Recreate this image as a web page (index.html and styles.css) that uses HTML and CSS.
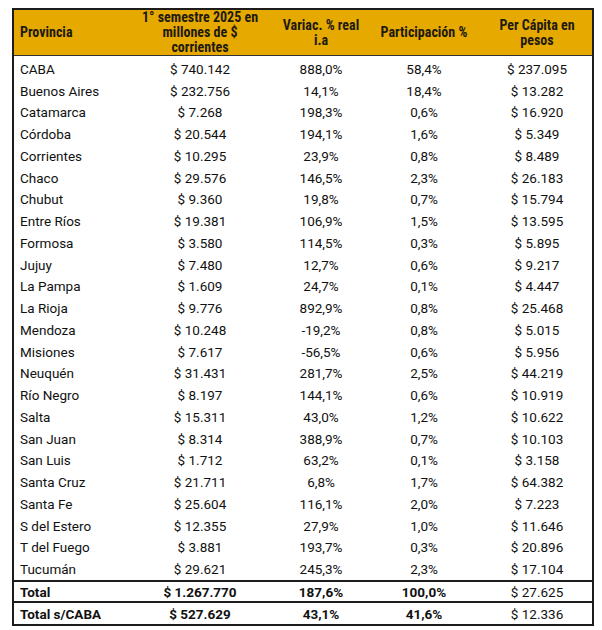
FILE: index.html
```html
<!DOCTYPE html>
<html lang="es">
<head>
    <meta charset="UTF-8">
    <title>Transferencias por provincia</title>
    <link rel="stylesheet" href="styles.css">
</head>
<body>
    <table class="provincias">
        <colgroup>
            <col class="c-prov">
            <col class="c-monto">
            <col class="c-var">
            <col class="c-part">
            <col class="c-pc">
        </colgroup>
        <thead>
            <tr>
                <th class="left">Provincia</th>
                <th>1° semestre 2025 en millones de $ corrientes</th>
                <th>Variac. % real<br>i.a</th>
                <th>Participación %</th>
                <th class="pc">Per Cápita en pesos</th>
            </tr>
        </thead>
        <tbody>
            <tr><td>CABA</td><td>$ 740.142</td><td>888,0%</td><td>58,4%</td><td class="pc">$ 237.095</td></tr>
            <tr><td>Buenos Aires</td><td>$ 232.756</td><td>14,1%</td><td>18,4%</td><td class="pc">$ 13.282</td></tr>
            <tr><td>Catamarca</td><td>$ 7.268</td><td>198,3%</td><td>0,6%</td><td class="pc">$ 16.920</td></tr>
            <tr><td>Córdoba</td><td>$ 20.544</td><td>194,1%</td><td>1,6%</td><td class="pc">$ 5.349</td></tr>
            <tr><td>Corrientes</td><td>$ 10.295</td><td>23,9%</td><td>0,8%</td><td class="pc">$ 8.489</td></tr>
            <tr><td>Chaco</td><td>$ 29.576</td><td>146,5%</td><td>2,3%</td><td class="pc">$ 26.183</td></tr>
            <tr><td>Chubut</td><td>$ 9.360</td><td>19,8%</td><td>0,7%</td><td class="pc">$ 15.794</td></tr>
            <tr><td>Entre Ríos</td><td>$ 19.381</td><td>106,9%</td><td>1,5%</td><td class="pc">$ 13.595</td></tr>
            <tr><td>Formosa</td><td>$ 3.580</td><td>114,5%</td><td>0,3%</td><td class="pc">$ 5.895</td></tr>
            <tr><td>Jujuy</td><td>$ 7.480</td><td>12,7%</td><td>0,6%</td><td class="pc">$ 9.217</td></tr>
            <tr><td>La Pampa</td><td>$ 1.609</td><td>24,7%</td><td>0,1%</td><td class="pc">$ 4.447</td></tr>
            <tr><td>La Rioja</td><td>$ 9.776</td><td>892,9%</td><td>0,8%</td><td class="pc">$ 25.468</td></tr>
            <tr><td>Mendoza</td><td>$ 10.248</td><td>-19,2%</td><td>0,8%</td><td class="pc">$ 5.015</td></tr>
            <tr><td>Misiones</td><td>$ 7.617</td><td>-56,5%</td><td>0,6%</td><td class="pc">$ 5.956</td></tr>
            <tr><td>Neuquén</td><td>$ 31.431</td><td>281,7%</td><td>2,5%</td><td class="pc">$ 44.219</td></tr>
            <tr><td>Río Negro</td><td>$ 8.197</td><td>144,1%</td><td>0,6%</td><td class="pc">$ 10.919</td></tr>
            <tr><td>Salta</td><td>$ 15.311</td><td>43,0%</td><td>1,2%</td><td class="pc">$ 10.622</td></tr>
            <tr><td>San Juan</td><td>$ 8.314</td><td>388,9%</td><td>0,7%</td><td class="pc">$ 10.103</td></tr>
            <tr><td>San Luis</td><td>$ 1.712</td><td>63,2%</td><td>0,1%</td><td class="pc">$ 3.158</td></tr>
            <tr><td>Santa Cruz</td><td>$ 21.711</td><td>6,8%</td><td>1,7%</td><td class="pc">$ 64.382</td></tr>
            <tr><td>Santa Fe</td><td>$ 25.604</td><td>116,1%</td><td>2,0%</td><td class="pc">$ 7.223</td></tr>
            <tr><td>S del Estero</td><td>$ 12.355</td><td>27,9%</td><td>1,0%</td><td class="pc">$ 11.646</td></tr>
            <tr><td>T del Fuego</td><td>$ 3.881</td><td>193,7%</td><td>0,3%</td><td class="pc">$ 20.896</td></tr>
            <tr><td>Tucumán</td><td>$ 29.621</td><td>245,3%</td><td>2,3%</td><td class="pc">$ 17.104</td></tr>
        </tbody>
        <tfoot>
            <tr><td>Total</td><td>$ 1.267.770</td><td>187,6%</td><td>100,0%</td><td class="pc">$ 27.625</td></tr>
            <tr class="last"><td>Total s/CABA</td><td>$ 527.629</td><td>43,1%</td><td>41,6%</td><td class="pc">$ 12.336</td></tr>
        </tfoot>
    </table>
</body>
</html>
```

FILE: styles.css
```css
body {
    margin: 0;
    padding: 8px 10px 0 12px;
    background: #fff;
    font-family: Roboto, "Liberation Sans", Arial, sans-serif;
    color: #111;
}
.provincias {
    width: 580px;
    border-collapse: collapse;
    border: 2px solid #1c1c1c;
    table-layout: fixed;
}
.c-prov { width: 119px; }
.c-monto { width: 136px; }
.c-var { width: 106px; }
.c-part { width: 100px; }
.c-pc { width: 119px; }

th {
    background: #e6a900;
    color: #1e1a10;
    font-family: "Liberation Sans Narrow", "Roboto Condensed", Roboto, sans-serif;
    font-size: 14px;
    font-weight: bold;
    line-height: 15px;
    height: 45px;
    padding: 0 4px;
    text-align: center;
    border-bottom: 1px solid #333;
}
th.left {
    text-align: left;
    padding-left: 6px;
}
td {
    font-size: 13.5px;
    height: 21.75px;
    padding: 0 4px;
    text-align: center;
    white-space: nowrap;
}
td:first-child {
    text-align: left;
    padding-left: 6px;
}
.pc {
    padding-left: 12px;
}
tbody tr:first-child td {
    padding-top: 2px;
}
tfoot tr td {
    border-top: 2px solid #1c1c1c;
    font-weight: bold;
    height: 19px;
}
tfoot tr.last td {
    height: 21px;
}
tfoot td.pc {
    font-weight: normal;
}
```
